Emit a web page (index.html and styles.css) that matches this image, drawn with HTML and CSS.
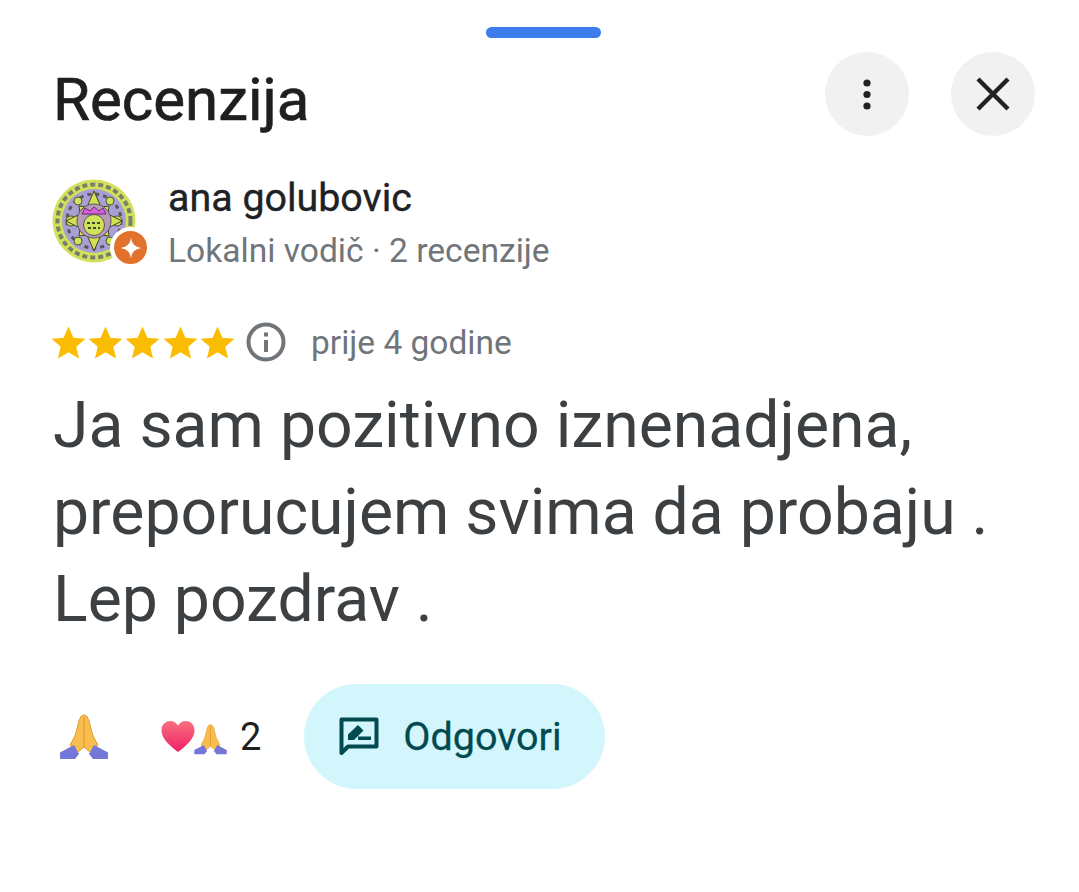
FILE: index.html
```html
<!DOCTYPE html>
<html lang="hr">
<head>
  <meta charset="UTF-8" />
  <title>Recenzija</title>
  <link rel="stylesheet" href="styles.css">
</head>
<body>

<div class="handle"></div>

<header class="top">
  <h1>Recenzija</h1>
  <div class="top-buttons">
    <button class="round">
      <svg width="40" height="40" viewBox="0 0 40 40"><circle cx="20" cy="9" r="3.6"/><circle cx="20" cy="20.5" r="3.6"/><circle cx="20" cy="32" r="3.6"/></svg>
    </button>
    <button class="round">
      <svg width="40" height="40" viewBox="0 0 40 40"><path d="M5 5 35 35M35 5 5 35" fill="none" stroke="#222" stroke-width="4.4"/></svg>
    </button>
  </div>
</header>

<section class="author">
  <div class="avatar">
    <svg width="84" height="84" viewBox="0 0 84 84">
      <circle cx="42" cy="42" r="41.5" fill="#d2e05a"/>
      <circle cx="42" cy="42" r="36.5" fill="none" stroke="#77806a" stroke-width="4" stroke-dasharray="5 3"/>
      <circle cx="42" cy="42" r="32" fill="#a8a0d2"/>
      <circle cx="42" cy="42" r="27" fill="none" stroke="#5a5560" stroke-width="3" stroke-dasharray="4 4"/>
      <circle cx="19" cy="42" r="5" fill="#cfe25a" stroke="#4f5530"/>
      <circle cx="65" cy="42" r="5" fill="#cfe25a" stroke="#4f5530"/>
      <circle cx="26" cy="22" r="4" fill="#cfe25a" stroke="#4f5530"/>
      <circle cx="58" cy="22" r="4" fill="#cfe25a" stroke="#4f5530"/>
      <circle cx="26" cy="62" r="4" fill="#cfe25a" stroke="#4f5530"/>
      <circle cx="58" cy="62" r="4" fill="#cfe25a" stroke="#4f5530"/>
      <path d="M42 12 49 28 57 27 56 35 70 42 56 49 57 57 49 56 42 72 35 56 27 57 28 49 14 42 28 35 27 27 35 28Z" fill="#d3e04f" stroke="#3f4030"/>
      <circle cx="42" cy="42" r="17" fill="#b79ab8" stroke="#5a5560"/>
      <path d="M30 35 33 29 38 32 42 28 47 32 51 29 54 35Z" fill="#d960dc" stroke="#6a2a6f"/>
      <circle cx="42" cy="46" r="10.500" fill="#cfe25a" stroke="#5a5560"/>
      <path d="M35 44h14M36 49h12" stroke="#3f4a2a" stroke-width="2" stroke-dasharray="3 2"/>
    </svg>
    <span class="badge">
      <svg width="24" height="24" viewBox="0 0 24 24"><path d="M12 1.5C13 8 16 11 22.5 12 16 13 13 16 12 22.5 11 16 8 13 1.5 12 8 11 11 8 12 1.5Z" fill="#fff"/></svg>
    </span>
  </div>
  <div class="author-text">
    <div class="name">ana golubovic</div>
    <div class="meta">Lokalni vodič · 2 recenzije</div>
  </div>
</section>

<div class="rating">
  <div class="stars">
    <svg width="39" height="39" viewBox="0 0 24 24"><path d="M12 2.2 15 9l7.4.7-5.6 4.9 1.7 7.2L12 18l-6.5 3.8 1.7-7.2L1.600 9.700 9 9Z"/></svg>
    <svg width="39" height="39" viewBox="0 0 24 24"><path d="M12 2.2 15 9l7.4.7-5.6 4.9 1.7 7.2L12 18l-6.5 3.8 1.7-7.2L1.600 9.700 9 9Z"/></svg>
    <svg width="39" height="39" viewBox="0 0 24 24"><path d="M12 2.2 15 9l7.4.7-5.6 4.9 1.7 7.2L12 18l-6.5 3.8 1.7-7.2L1.600 9.700 9 9Z"/></svg>
    <svg width="39" height="39" viewBox="0 0 24 24"><path d="M12 2.2 15 9l7.4.7-5.6 4.9 1.7 7.2L12 18l-6.5 3.8 1.7-7.2L1.600 9.700 9 9Z"/></svg>
    <svg width="39" height="39" viewBox="0 0 24 24"><path d="M12 2.2 15 9l7.4.7-5.6 4.9 1.7 7.2L12 18l-6.5 3.8 1.7-7.2L1.600 9.700 9 9Z"/></svg>
  </div>
  <svg class="info" width="40" height="40" viewBox="0 0 40 40">
    <circle cx="20" cy="20" r="17.500" fill="none" stroke="#70757a" stroke-width="4"/>
    <rect x="18" y="18" width="4" height="12" fill="#70757a"/>
    <rect x="18" y="10.500" width="4" height="4" fill="#70757a"/>
  </svg>
  <span class="date">prije 4 godine</span>
</div>

<p class="review">Ja sam pozitivno iznenadjena,<br>preporucujem svima da probaju .<br>Lep pozdrav .</p>

<div class="actions">
  <svg class="pray-big" width="48" height="46" viewBox="0 0 48 46">
    <path d="M24 1C20.500 1 19 6 18 11L15 22 10 31 18 38 24 33 30 38 38 31 33 22 30 11C29 6 27.500 1 24 1Z" fill="#f7bd4f" stroke="#e59a2c"/>
    <path d="M24 3V33" stroke="#e59a2c" stroke-width="1.200"/>
    <path d="M0 38.500V45H15L19 40 14 31Z" fill="#7277d8"/>
    <path d="M48 38.500V45H33L29 40 34 31Z" fill="#7277d8"/>
  </svg>
  <div class="reaction">
    <svg width="36" height="33" viewBox="0 0 36 34">
      <defs><linearGradient id="heart" x1="0" y1="0" x2="0" y2="1"><stop offset="0" stop-color="#f8717f"/><stop offset="1" stop-color="#f01f66"/></linearGradient></defs>
      <path d="M18 33C9 26 1 19 1 10.500 1 4.500 5.500 1 10 1 13.500 1 16.500 3 18 6 19.500 3 22.500 1 26 1 30.500 1 35 4.500 35 10.500 35 19 27 26 18 33Z" fill="url(#heart)"/>
    </svg>
    <svg class="pray-small" width="33" height="31" viewBox="0 0 48 46">
      <path d="M24 1C20.500 1 19 6 18 11L15 22 10 31 18 38 24 33 30 38 38 31 33 22 30 11C29 6 27.500 1 24 1Z" fill="#f7bd4f" stroke="#e59a2c"/>
      <path d="M24 3V33" stroke="#e59a2c" stroke-width="1.200"/>
      <path d="M0 38.500V45H15L19 40 14 31Z" fill="#7277d8"/>
      <path d="M48 38.500V45H33L29 40 34 31Z" fill="#7277d8"/>
    </svg>
    <span class="count">2</span>
  </div>
  <button class="reply">
    <svg width="42" height="42" viewBox="0 0 42 42">
      <path d="M3.500 3.500H38.500V30.500H10L3.500 37Z" fill="none" stroke="#004a50" stroke-width="4" stroke-linejoin="round"/>
      <path d="M10 24V18.500L20 9 25.500 14.500 16 24Z" fill="#004a50"/>
      <rect x="20" y="20.500" width="13" height="3.500" fill="#004a50"/>
    </svg>
    Odgovori
  </button>
</div>

</body>
</html>
```

FILE: styles.css
```css
body {
  margin: 0;
  padding: 0 44px 0 53px;
  background: #fff;
  font-family: Roboto, "Noto Sans", sans-serif;
  color: #1f1f1f;
}
.handle {
  width: 115px;
  height: 11px;
  margin: 27px auto 0 433px;
  border-radius: 6px;
  background: #3b7ded;
}
.top {
  display: flex;
  justify-content: space-between;
  align-items: center;
  margin-top: 14px;
  height: 84px;
}
h1 {
  margin: 11px 0 0;
  font-size: 60px;
  font-weight: 400;
  -webkit-text-stroke: 0.7px #1f1f1f;
}
.top-buttons {
  display: flex;
  gap: 42px;
}
.round {
  display: flex;
  align-items: center;
  justify-content: center;
  width: 84px;
  height: 84px;
  padding: 0;
  border: 0;
  border-radius: 50%;
  background: #f1f1f1;
}
.round svg {
  fill: #222;
}
.author {
  display: flex;
  align-items: flex-start;
  gap: 32px;
  margin-top: 43px;
  margin-left: -1px;
}
.avatar {
  position: relative;
  width: 84px;
  height: 84px;
  flex: none;
}
.badge {
  position: absolute;
  right: -15px;
  bottom: -5px;
  display: flex;
  align-items: center;
  justify-content: center;
  width: 33px;
  height: 33px;
  border: 4px solid #fff;
  border-radius: 50%;
  background: #e2712b;
}
.author-text {
  margin-top: -6px;
}
.name {
  font-size: 39.400px;
  line-height: 50px;
  color: #202124;
  -webkit-text-stroke: 0.4px #202124;
}
.meta {
  margin-top: 3px;
  font-size: 33.600px;
  line-height: 50px;
  color: #70757a;
}
.rating {
  display: flex;
  align-items: center;
  margin-top: 41px;
  height: 50px;
}
.stars {
  display: flex;
  margin-left: -4px;
}
.stars svg {
  fill: #fbbc04;
  margin-right: -1.800px;
}
.info {
  margin-left: 11px;
}
.date {
  margin-left: 25px;
  font-size: 33.500px;
  color: #70757a;
}
.review {
  margin: 15px 0 0;
  font-size: 64.300px;
  line-height: 87px;
  color: #3c4043;
  white-space: nowrap;
}
.actions {
  display: flex;
  align-items: center;
  margin-top: 41px;
  height: 105px;
}
.pray-big {
  margin-left: 7px;
  flex: none;
}
.reaction {
  display: flex;
  align-items: center;
  margin-left: 52px;
}
.pray-small {
  margin-left: -2px;
  margin-top: 6px;
}
.count {
  margin-left: 13px;
  font-size: 38px;
}
.reply {
  display: flex;
  align-items: center;
  gap: 23px;
  height: 105px;
  margin-left: 43px;
  padding: 0 43px 0 34px;
  border: 0;
  border-radius: 53px;
  background: #d3f6fd;
  color: #004a50;
  font-family: Roboto, "Noto Sans", sans-serif;
  font-size: 39.500px;
  -webkit-text-stroke: 0.3px #004a50;
}
```
